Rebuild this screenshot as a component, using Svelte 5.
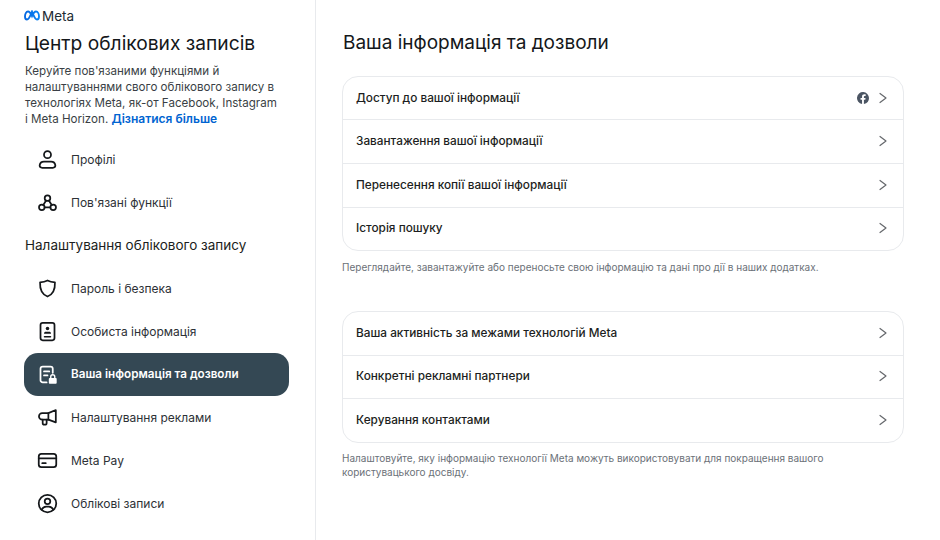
<script>
  const topItems = [
    { label: "Профілі", icon: "user" },
    { label: "Пов'язані функції", icon: "nodes" },
  ];
  const accountItems = [
    { label: "Пароль і безпека", icon: "shield" },
    { label: "Особиста інформація", icon: "idcard" },
    { label: "Ваша інформація та дозволи", icon: "info", active: true },
    { label: "Налаштування реклами", icon: "megaphone" },
    { label: "Meta Pay", icon: "card" },
    { label: "Облікові записи", icon: "account" },
  ];
  const groupOne = [
    { label: "Доступ до вашої інформації", fb: true },
    { label: "Завантаження вашої інформації" },
    { label: "Перенесення копії вашої інформації" },
    { label: "Історія пошуку" },
  ];
  const groupTwo = [
    { label: "Ваша активність за межами технологій Meta" },
    { label: "Конкретні рекламні партнери" },
    { label: "Керування контактами" },
  ];
</script>

{#snippet icon(name)}
  <svg class="nav-icon" viewBox="0 0 24 24" fill="none" stroke="currentColor" stroke-width="2" stroke-linecap="round" stroke-linejoin="round">
    {#if name === "user"}
      <circle cx="12" cy="6.500" r="4" />
      <path d="M8 14.500h8a5 5 0 0 1 5 4.200c0 1.800-1.300 2.800-3 2.800H6c-1.700 0-3-1-3-2.800a5 5 0 0 1 5-4.200z" />
    {:else if name === "nodes"}
      <circle cx="12" cy="7" r="3.200" />
      <circle cx="5.500" cy="17.500" r="3.200" />
      <circle cx="18.500" cy="17.500" r="3.200" />
      <path d="M10.400 9.800l-3.200 5M13.600 9.800l3.200 5M8.700 17.500h6.600" />
    {:else if name === "shield"}
      <path d="M12 2.800c3 1.600 5.600 2 8.500 2.200.3 7.500-1.600 13.600-8.500 16.200C5.100 18.600 3.200 12.500 3.500 5c2.900-.2 5.500-.6 8.500-2.200z" />
    {:else if name === "idcard"}
      <rect x="4" y="2" width="16" height="20" rx="2.500" />
      <circle cx="12" cy="8.500" r="2" fill="currentColor" stroke="none" />
      <path d="M8 14.500c0-1.500 1-2.200 2-2.200h4c1 0 2 .7 2 2.200z" fill="currentColor" stroke="none" />
      <path d="M8.500 18h7" stroke-width="1.600" />
    {:else if name === "info"}
      <path d="M11 21H6.500A2.500 2.500 0 0 1 4 18.500v-13A2.500 2.500 0 0 1 6.500 3h9A2.500 2.500 0 0 1 18 5.500V10" />
      <path d="M8 8.500h6M8 13h4" />
      <rect x="13.500" y="16" width="9" height="6.500" rx="1" fill="currentColor" stroke="none" />
      <path d="M15.700 16v-1.500a2.300 2.300 0 0 1 4.600 0V16" stroke-width="1.600" />
    {:else if name === "megaphone"}
      <path d="M21.500 3.500v14L13 14.500H6a3.500 3.500 0 0 1 0-7.500h7z" />
      <path d="M6.500 14.500v3.700a2 2 0 0 0 2 2h.5a2 2 0 0 0 2-2v-3.700M13 7v7.500" />
    {:else if name === "card"}
      <rect x="2" y="4.500" width="20" height="15" rx="3" />
      <path d="M2 9.500h20" />
      <path d="M6 15h4" />
    {:else if name === "account"}
      <circle cx="12" cy="12" r="10" />
      <circle cx="12" cy="9.500" r="3.200" />
      <path d="M5.500 19c1-2.500 3-3.500 5-3.500h3c2 0 4 1 5 3.500" />
    {/if}
  </svg>
{/snippet}

{#snippet navItem(item)}
  <li class="nav-item" class:active={item.active}>
    {@render icon(item.icon)}
    <span>{item.label}</span>
  </li>
{/snippet}

{#snippet row(item)}
  <li class="row">
    <span class="row-label">{item.label}</span>
    {#if item.fb}
      <svg class="fb" viewBox="0 0 24 24">
        <path fill="#4b5563" d="M24 12a12 12 0 1 0-13.900 11.900v-8.400H7.100V12h3V9.400c0-3 1.800-4.700 4.500-4.700 1.300 0 2.700.2 2.700.2v3h-1.500c-1.500 0-2 .9-2 1.900V12h3.300l-.5 3.500h-2.800v8.400A12 12 0 0 0 24 12z" />
      </svg>
    {/if}
    <svg class="chevron" viewBox="0 0 12 12" fill="none" stroke="#65686c" stroke-width="1.200" stroke-linecap="round" stroke-linejoin="round">
      <path d="M3 1.500L9 6 3 10.500" />
    </svg>
  </li>
{/snippet}

<div class="page">
  <aside class="sidebar">
    <div class="logo">
      <svg class="logo-mark" viewBox="0 0 24 16" fill="none" stroke-width="2.800" stroke-linecap="round">
        <defs>
          <linearGradient id="metaGrad" x1="0" y1="0" x2="1" y2="0">
            <stop offset="0" stop-color="#0668e1" />
            <stop offset="1" stop-color="#0a84f5" />
          </linearGradient>
        </defs>
        <path stroke="url(#metaGrad)" d="M6 2C3.200 2 1.500 6 1.500 9.500c0 2.600 1.100 4.500 3 4.500 3.200 0 5-6 7.500-12 2.500 6 4.300 12 7.500 12 1.900 0 3-1.900 3-4.500C22.500 6 20.800 2 18 2c-2.500 0-4.200 3-6 7-1.800-4-3.500-7-6-7z" />
      </svg>
      <span>Meta</span>
    </div>
    <h1>Центр облікових записів</h1>
    <p class="intro">
      Керуйте пов'язаними функціями й налаштуваннями свого облікового запису в технологіях Meta, як-от Facebook, Instagram і&nbsp;Meta Horizon.
      <a href="#more">Дізнатися більше</a>
    </p>
    <ul class="nav">
      {#each topItems as item}
        {@render navItem(item)}
      {/each}
    </ul>
    <h2>Налаштування облікового запису</h2>
    <ul class="nav">
      {#each accountItems as item}
        {@render navItem(item)}
      {/each}
    </ul>
  </aside>

  <main class="content">
    <h1>Ваша інформація та дозволи</h1>
    <ul class="card">
      {#each groupOne as item}
        {@render row(item)}
      {/each}
    </ul>
    <p class="hint">Переглядайте, завантажуйте або переносьте свою інформацію та дані про дії в наших додатках.</p>
    <ul class="card second">
      {#each groupTwo as item}
        {@render row(item)}
      {/each}
    </ul>
    <p class="hint">Налаштовуйте, яку інформацію технології Meta можуть використовувати для покращення вашого користувацького досвіду.</p>
  </main>
</div>

<style>
  :global(body) {
    background: #fff;
  }

  .page {
    display: flex;
    width: 940px;
    height: 540px;
    overflow: hidden;
    font-family: Inter, "Noto Sans", sans-serif;
    color: #1c1e21;
  }

  ul {
    list-style: none;
    margin: 0;
    padding: 0;
  }

  .sidebar {
    box-sizing: border-box;
    width: 316px;
    flex-shrink: 0;
    padding: 8px 26px 0 24px;
    border-right: 1px solid #e8eaed;
  }

  .logo {
    display: flex;
    align-items: center;
    gap: 2px;
    height: 15px;
    font-size: 13.500px;
    color: #1c2b33;
  }

  .logo-mark {
    width: 16px;
    height: 11px;
  }

  .sidebar h1 {
    margin: 6px 0 0 1px;
    font-size: 19.200px;
    line-height: 28px;
    font-weight: 400;
    color: #14171a;
  }

  .intro {
    margin: 6px 0 0 1px;
    font-size: 11.600px;
    line-height: 16px;
    color: #3a3f45;
  }

  .intro a {
    font-size: 12px;
    color: #0064d1;
    font-weight: 600;
    text-decoration: none;
  }

  .nav {
    margin-top: 10.500px;
  }

  .sidebar h2 {
    margin: 0 0 0 1px;
    height: 43px;
    line-height: 43px;
    font-size: 13.500px;
    font-weight: 400;
    color: #1c1e21;
  }

  .sidebar h2 + .nav {
    margin-top: 0;
  }

  .nav-item {
    display: flex;
    align-items: center;
    gap: 13px;
    height: 43px;
    padding-left: 13px;
    border-radius: 14px;
    font-size: 12px;
    color: #2d3136;
  }

  .nav-item.active {
    background: #344854;
    color: #fff;
    font-size: 11.700px;
    font-weight: 600;
  }

  .nav-icon {
    width: 21px;
    height: 21px;
    color: #14171a;
  }

  .active .nav-icon {
    color: #fff;
  }

  .content {
    flex: 1;
    padding: 29px 36px 0 26px;
  }

  .content h1 {
    margin: 0 0 0 1px;
    font-size: 19px;
    line-height: 28px;
    font-weight: 400;
    color: #14171a;
  }

  .card {
    margin-top: 19px;
    border: 1px solid #e8eaed;
    border-radius: 16px;
  }

  .card.second {
    margin-top: 37.500px;
  }

  .row {
    box-sizing: border-box;
    display: flex;
    align-items: center;
    height: 43.600px;
    padding: 0 14px 1px 13px;
    border-top: 1px solid #e8eaed;
    font-size: 11.800px;
    font-weight: 500;
    color: #1c1e21;
  }

  .row:first-child {
    height: 42.400px;
    border-top: 0;
  }

  .row-label {
    flex: 1;
  }

  .fb {
    width: 12px;
    height: 12px;
    margin-right: 8px;
  }

  .chevron {
    width: 12px;
    height: 12px;
  }

  .hint {
    margin: 8.500px 0 0;
    font-size: 10px;
    line-height: 14px;
    color: #6b7178;
    max-width: 540px;
  }
</style>
